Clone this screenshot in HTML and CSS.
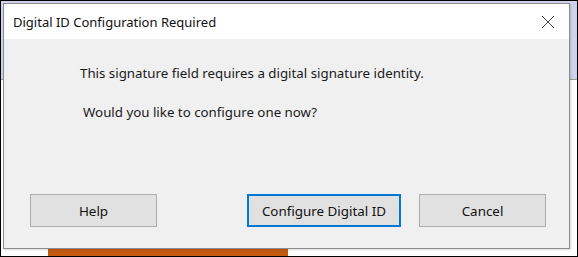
FILE: index.html
```html
<!DOCTYPE html>
<html lang="en">
<head>
    <meta charset="UTF-8">
    <title>Digital ID Configuration Required</title>
    <link rel="stylesheet" href="styles.css">
</head>
<body>
    <div class="screen">
        <div class="backdrop-top"></div>
        <div class="backdrop-bar"></div>

        <div class="dialog">
            <div class="title-bar">
                <span class="title">Digital ID Configuration Required</span>
                <button class="close-btn" aria-label="Close">
                    <svg width="14" height="14" viewBox="0 0 14 14" fill="none" stroke="#444" stroke-width="1">
                        <line x1="1" y1="1" x2="13" y2="13"></line>
                        <line x1="13" y1="1" x2="1" y2="13"></line>
                    </svg>
                </button>
            </div>
            <div class="dialog-body">
                <p class="msg">This signature field requires a digital signature identity.</p>
                <p class="msg msg-question">Would you like to configure one now?</p>

                <div class="actions">
                    <button class="btn">Help</button>
                    <div class="actions-right">
                        <button class="btn btn-default">Configure Digital ID</button>
                        <button class="btn">Cancel</button>
                    </div>
                </div>
            </div>
        </div>
    </div>
</body>
</html>
```

FILE: styles.css
```css
:root {
    --dialog-bg: #f0f0f0;
    --button-bg: #e1e1e1;
    --button-border: #adadad;
    --focus-color: #0078d7;
}

* {
    box-sizing: border-box;
}

body {
    margin: 0;
    padding: 0;
    width: 578px;
    height: 257px;
    overflow: hidden;
    border: 1px solid #000;
    font-family: 'Noto Sans', 'Open Sans', sans-serif;
    color: #1a1a1a;
    background: #fff;
}

.screen {
    position: relative;
    width: 576px;
    height: 255px;
    overflow: hidden;
    background: #fff;
}

.backdrop-top {
    height: 79px;
    background: #cfd3ea;
    border-bottom: 1px solid #9a9a9a;
}

/* orange strip peeking under the dialog */
.backdrop-bar {
    position: absolute;
    left: 47px;
    top: 247px;
    width: 240px;
    height: 10px;
    background: #c55a11;
}

.dialog {
    position: absolute;
    left: 2px;
    top: 2px;
    width: 567px;
    height: 246px;
    border: 1px solid #8c8c8c;
    background: var(--dialog-bg);
    display: flex;
    flex-direction: column;
    box-shadow: 1px 1px 2px rgba(0,0,0,0.15);
}

.title-bar {
    height: 35px;
    background: #fff;
    display: flex;
    align-items: center;
    justify-content: space-between;
    padding: 0 10px 0 9px;
}

.title {
    font-size: 13px;
    color: #111;
}

.close-btn {
    border: none;
    background: none;
    padding: 0;
    width: 20px;
    height: 20px;
    margin-right: 1px;
    display: flex;
    align-items: center;
    justify-content: center;
}

.dialog-body {
    flex: 1;
    display: flex;
    flex-direction: column;
    padding: 24px 23px 21px 26px;
}

.msg {
    margin: 0;
    padding-left: 50px;
    font-size: 13.3px;
    line-height: 20px;
}

.msg-question {
    margin-top: 19px;
    padding-left: 53px;
}

.actions {
    margin-top: auto;
    display: flex;
    align-items: center;
    justify-content: space-between;
}

.actions-right {
    display: flex;
    gap: 18px;
}

.btn {
    height: 33px;
    width: 127px;
    background: var(--button-bg);
    border: 1px solid var(--button-border);
    font-family: inherit;
    font-size: 13.4px;
    color: #111;
    padding: 0;
}

.btn-default {
    width: 154px;
    border: 2px solid var(--focus-color);
}
```
